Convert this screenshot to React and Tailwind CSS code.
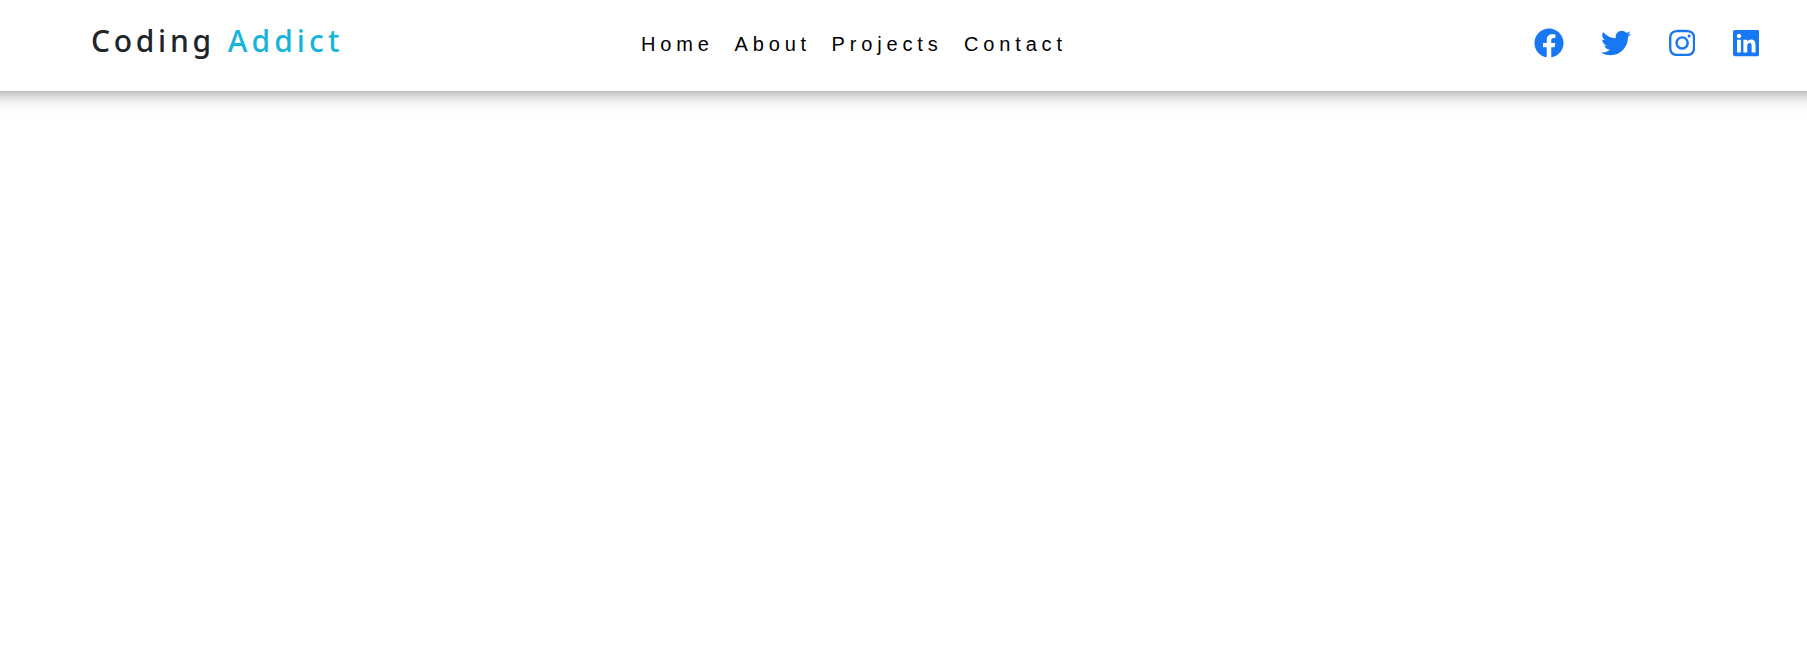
import { FaFacebook, FaTwitter, FaInstagram, FaLinkedin } from "react-icons/fa";

const links = [
  { label: "Home", width: "w-[93.5px]" },
  { label: "About", width: "w-[97px]" },
  { label: "Projects", width: "w-[132.5px]" },
  { label: "Contact", width: "w-[116px]" },
];

export default function App() {
  return (
    <div className="min-h-screen overflow-hidden bg-white">
      <nav className="-mx-6 flex h-[91px] items-start bg-white pl-[115px] shadow-[0_0_18px_0_rgba(0,0,0,0.5)]">
        <h1 className="w-[550px] shrink-0 whitespace-nowrap pt-[18px] font-['Noto_Sans',sans-serif] text-[30px] leading-[45px] font-medium tracking-[3.7px] text-[#212529]">
          Coding <span className="ml-[1.5px] tracking-[4.1px] text-[#17b5dc]">Addict</span>
        </h1>
        <ul className="flex shrink-0 pt-[29px] font-['Liberation_Sans',Arial,sans-serif] text-[20px] leading-[30px] tracking-[4.85px] text-black">
          {links.map(({ label, width }) => (
            <li key={label} className={width}>
              <a href="#">{label}</a>
            </li>
          ))}
        </ul>
        <div className="ml-auto flex items-center gap-[37.5px] pt-[27.6px] pr-[72.1px] text-[30px] text-[#1877f2]">
          <a href="#" aria-label="Facebook"><FaFacebook /></a>
          <a href="#" aria-label="Twitter"><FaTwitter /></a>
          <a href="#" aria-label="Instagram"><FaInstagram className="w-[26.25px]" /></a>
          <a href="#" aria-label="LinkedIn"><FaLinkedin className="w-[26.25px]" /></a>
        </div>
      </nav>
    </div>
  );
}
